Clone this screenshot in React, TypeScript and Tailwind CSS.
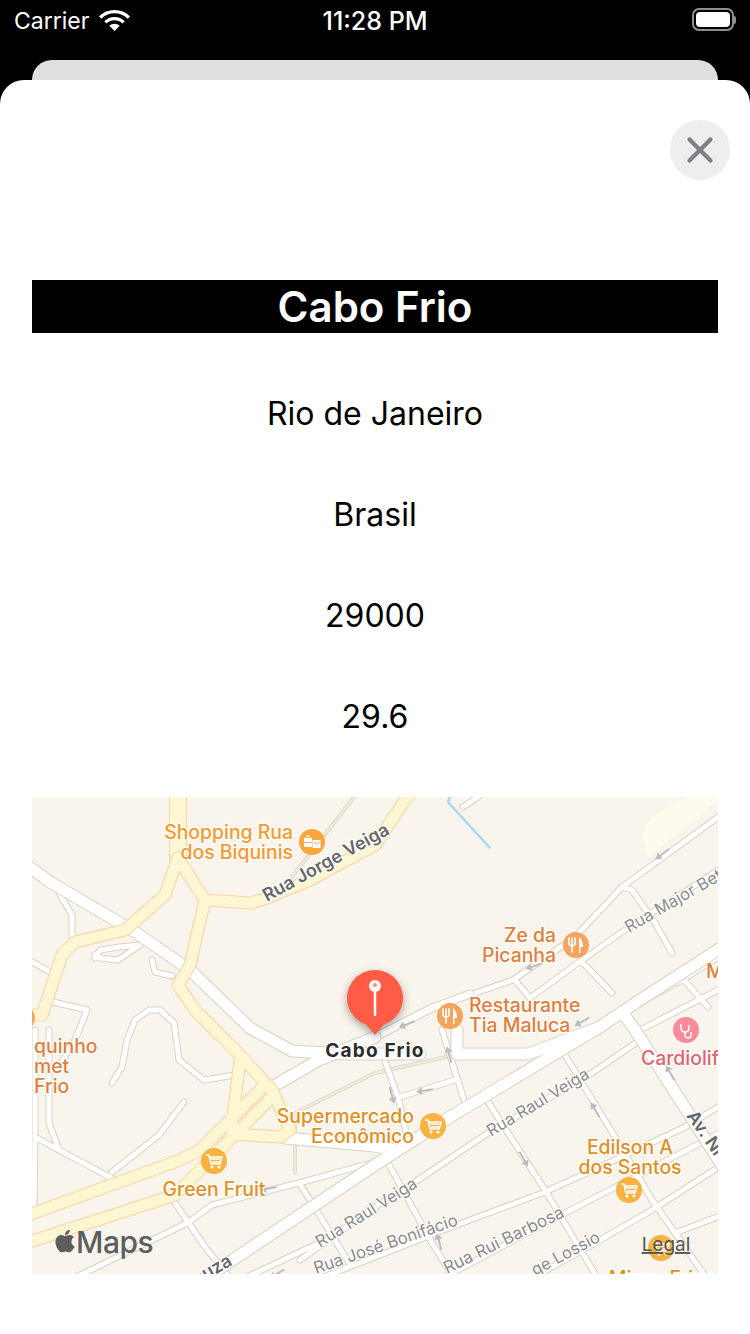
import { FC } from "react";
import { X } from "lucide-react";
import { FaApple } from "react-icons/fa";

type Pt = [number, number];

// map roads, in page coordinates (the svg viewBox matches the page)
const bigRoads: Pt[][] = [
  [[20, 860], [50, 882], [135, 932], [190, 970], [250, 1028], [292, 1051], [345, 1054], [420, 1054]],
  [[272, 1087], [319, 1060], [375, 1037]],
  [[195, 1285], [375, 1165], [445, 1120], [595, 1030], [640, 1000], [730, 942]],
  [[457, 1030], [457, 1054], [528, 1054], [600, 1027]],
  [[622, 1012], [635, 1030], [725, 1170]],
  [[285, 1138], [375, 1146], [395, 1150]],
];

const midRoads: Pt[][] = [[[375, 1037], [432, 1008], [470, 994]]];

const thinRoads: Pt[][] = [
  [[432, 1008], [513, 980], [575, 937], [622, 887], [725, 812]],
  [[622, 887], [632, 890], [655, 923], [672, 953]],
  [[515, 980], [530, 998], [582, 960], [625, 930], [725, 866]],
  [[582, 962], [612, 993]],
  [[632, 1007], [682, 980], [725, 953]],
  [[682, 978], [708, 1007]],
  [[640, 1030], [718, 990]],
  [[562, 1050], [615, 1137], [652, 1200], [708, 1280]],
  [[375, 1207], [418, 1180], [488, 1133], [592, 1073], [640, 1040]],
  [[300, 1260], [375, 1207]],
  [[488, 1102], [545, 1190], [595, 1274]],
  [[290, 1290], [375, 1257], [462, 1223], [545, 1192], [615, 1160], [685, 1127], [725, 1103]],
  [[430, 1285], [565, 1213], [635, 1177], [725, 1130]],
  [[520, 1285], [595, 1243], [652, 1210], [725, 1163]],
  [[675, 1233], [725, 1214]],
  [[388, 1163], [432, 1243], [455, 1280]],
  [[382, 1053], [398, 1097], [408, 1140]],
  [[442, 1030], [465, 1103]],
  [[400, 1097], [455, 1080]],
  [[184, 1102], [159, 1135], [112, 1172]],
  [[112, 1083], [122, 1067], [127, 1040], [135, 1020], [149, 1010], [160, 1010], [174, 1023], [179, 1060], [204, 1080], [235, 1075]],
  [[32, 962], [52, 973]],
  [[45, 1000], [87, 1010], [75, 1040], [60, 1065]],
  [[35, 1030], [35, 1137], [115, 1180], [120, 1182]],
  [[49, 1030], [49, 1123], [59, 1150]],
  [[35, 1137], [34, 1207]],
  [[60, 1285], [189, 1222], [212, 1205], [299, 1183], [375, 1162]],
  [[175, 1203], [205, 1247], [232, 1280]],
  [[299, 1183], [312, 1203], [349, 1263]],
  [[312, 1203], [375, 1167]],
  [[230, 1285], [319, 1243], [375, 1210]],
  [[60, 895], [72, 915], [72, 937]],
  [[95, 958], [100, 950], [120, 947], [140, 945], [118, 960], [100, 958], [95, 955]],
  [[152, 960], [155, 972], [172, 976]],
  [[478, 797], [463, 807]],
];

const paleRoads: Pt[][] = [
  [[354, 797], [292, 877]],
  [[455, 1055], [375, 1073], [295, 1113], [295, 1173]],
];

const yellowRoads: Pt[][] = [
  [[178, 858], [205, 900], [250, 903], [262, 900], [310, 880], [375, 845], [412, 790]],
  [[178, 858], [165, 895], [125, 930], [75, 942], [62, 955], [42, 1015], [25, 1015]],
  [[205, 900], [190, 965], [178, 985], [195, 1010], [235, 1050], [272, 1090], [290, 1130], [280, 1137], [232, 1134]],
  [[20, 1218], [180, 1160], [200, 1150], [265, 1085]],
  [[20, 1245], [175, 1195], [200, 1170], [272, 1097]],
  [[240, 1060], [232, 1125]],
];

const yellowTop: Pt[][] = [[[178, 790], [178, 860]]];

const toPoints = (pts: Pt[]) => pts.map((p) => p.join(",")).join(" ");

const Roads: FC<{ list: Pt[][]; width: number; casing: string; fill: string }> = ({
  list,
  width,
  casing,
  fill,
}) => (
  <g fill="none" strokeLinecap="round" strokeLinejoin="round">
    {list.map((r, i) => (
      <polyline key={`c${i}`} points={toPoints(r)} stroke={casing} strokeWidth={width + 2} />
    ))}
    {list.map((r, i) => (
      <polyline key={`f${i}`} points={toPoints(r)} stroke={fill} strokeWidth={width} />
    ))}
  </g>
);

type LabelProps = {
  x: number;
  y: number;
  color: string;
  size?: number;
  weight?: number;
  anchor?: "start" | "middle" | "end";
  rotate?: number;
  spacing?: number;
  text: string;
};

const Label: FC<LabelProps> = ({ x, y, color, size = 19.4, weight = 500, anchor = "start", rotate, spacing, text }) => (
  <text
    x={x}
    y={y}
    fill={color}
    fontSize={size}
    fontWeight={weight}
    textAnchor={anchor}
    letterSpacing={spacing}
    stroke="#ffffff"
    strokeWidth={2.5}
    strokeOpacity={0.85}
    paintOrder="stroke"
    transform={rotate ? `rotate(${rotate} ${x} ${y})` : undefined}
  >
    {text}
  </text>
);

const Arrow: FC<{ x: number; y: number; angle: number }> = ({ x, y, angle }) => (
  <g transform={`translate(${x} ${y}) rotate(${angle})`} fill="#bcbcbc">
    <rect x="-9" y="-1" width="14" height="2" />
    <path d="M-12 0l6-4v8z" />
  </g>
);

const Cart: FC<{ x: number; y: number; bg?: string }> = ({ x, y, bg = "#f7b23f" }) => (
  <g transform={`translate(${x} ${y})`}>
    <circle r="13" fill={bg} />
    <path d="M-8-6h3l2 9h9l2-7H-4" fill="none" stroke="#fff" strokeWidth="1.6" strokeLinejoin="round" />
    <path d="M-3-2h9M-2 1h8" stroke="#fff" strokeWidth="1.4" />
    <circle cx="-2" cy="6" r="1.5" fill="#fff" />
    <circle cx="5" cy="6" r="1.5" fill="#fff" />
  </g>
);

const Fork: FC<{ x: number; y: number }> = ({ x, y }) => (
  <g transform={`translate(${x} ${y})`}>
    <circle r="13" fill="#f6a35c" />
    <path d="M-7-7v5q0 3 3 3t3-3v-5M-4-7v14" fill="none" stroke="#fff" strokeWidth="1.7" strokeLinecap="round" />
    <path d="M3-8q4 3 4 10h-2.500v6h-1.500z" fill="#fff" />
  </g>
);

const MapView: FC = () => (
  <svg viewBox="32 797 686 477" className="block w-[686px] h-[477px] bg-[#f9f4ec] font-['Inter',sans-serif]">
    <path d="M642 833q6-20 46-36h30v4l-70 57z" fill="#fdfaee" />
    <polyline points="450,797 448,802 490,848" fill="none" stroke="#a9d9ee" strokeWidth="2.500" />
    <Roads list={paleRoads} width={2} casing="#e0dccb" fill="#efeadb" />
    <Roads list={thinRoads} width={5} casing="#d9d2c6" fill="#ffffff" />
    <Roads list={midRoads} width={7} casing="#d9d2c6" fill="#ffffff" />
    <Roads list={bigRoads} width={11} casing="#d9d2c6" fill="#ffffff" />
    <Roads list={yellowTop} width={16} casing="#fbd3a0" fill="#fdf6d3" />
    <Roads list={yellowRoads} width={11} casing="#fbd3a0" fill="#fdf6d3" />

    <Arrow x={665} y={852} angle={-38} />
    <Arrow x={537} y={965} angle={-20} />
    <Arrow x={410} y={1023} angle={-22} />
    <Arrow x={585} y={1020} angle={-30} />
    <Arrow x={450} y={1058} angle={75} />
    <Arrow x={391} y={1092} angle={-105} />
    <Arrow x={428} y={1090} angle={-10} />
    <Arrow x={272} y={1188} angle={-10} />
    <Arrow x={672} y={1076} angle={60} />
    <Arrow x={597} y={1113} angle={60} />
    <Arrow x={522} y={1156} angle={-120} />
    <Arrow x={440} y={1245} angle={75} />
    <Arrow x={280} y={1272} angle={-30} />

    <Label x={293} y={839} anchor="end" color="#f59a2e" text="Shopping Rua" />
    <Label x={293} y={859} anchor="end" color="#f59a2e" text="dos Biquinis" />
    <g transform="translate(312 842)">
      <circle r="13" fill="#f9a63d" />
      <rect x="-8" y="-4" width="8" height="4" fill="#fff" />
      <rect x="-8" y="1" width="8" height="4" fill="#fff" />
      <rect x="0.500" y="-2" width="8" height="8" fill="#fff" />
      <path d="M-6-4q2-5 4 0" fill="none" stroke="#fff" strokeWidth="1" />
      <path d="M2 0l2.500 2 2.500-2" fill="none" stroke="#f9a63d" strokeWidth="1" />
    </g>
    <Label x={267} y={902} rotate={-29} size={18} weight={600} color="#66666a" text="Rua Jorge Veiga" />

    <Label x={556} y={942} anchor="end" color="#e07f3c" text="Ze da" />
    <Label x={556} y={962} anchor="end" color="#e07f3c" text="Picanha" />
    <Fork x={576} y={945} />
    <Label x={469} y={1012} color="#e07f3c" text="Restaurante" />
    <Label x={469} y={1032} color="#e07f3c" text="Tia Maluca" />
    <Fork x={450} y={1016} />
    <Label x={706} y={978} color="#e07f3c" text="M" />
    <circle cx="22" cy="1018" r="13" fill="#f6a35c" />
    <Label x={34} y={1053} color="#e07f3c" text="quinho" />
    <Label x={34} y={1073} color="#e07f3c" text="met" />
    <Label x={34} y={1093} color="#e07f3c" text="Frio" />

    <g transform="translate(686 1030)">
      <circle r="13" fill="#f98a9a" />
      <path d="M-5-6v4q0 4 4 4t4-4v-3M-1 2v3q0 3 3 3t3-3v-3" fill="none" stroke="#fff" strokeWidth="1.5" />
    </g>
    <Label x={641} y={1065} color="#e0656f" text="Cardiolif" />

    <Label x={414} y={1123} anchor="end" color="#e0901f" text="Supermercado" />
    <Label x={414} y={1143} anchor="end" color="#e0901f" text="Econômico" />
    <Cart x={433} y={1126} />
    <Cart x={214} y={1161} />
    <Label x={214} y={1196} anchor="middle" color="#e0901f" text="Green Fruit" />
    <Label x={630} y={1154} anchor="middle" color="#e0901f" text="Edilson A" />
    <Label x={630} y={1174} anchor="middle" color="#e0901f" text="dos Santos" />
    <Cart x={629} y={1190} />
    <Cart x={661} y={1248} />
    <Label x={662} y={1285} anchor="middle" color="#e0901f" text="Minas Frios" />
    <circle cx="260" cy="1287" r="13" fill="#f98a9a" />

    <Label x={629} y={933} rotate={-30} size={16.5} weight={400} color="#8b8b8b" text="Rua Major Bet" />
    <Label x={491} y={1137} rotate={-31} size={16.5} weight={400} color="#8b8b8b" text="Rua Raul Veiga" />
    <Label x={320} y={1248} rotate={-32} size={16.5} weight={400} color="#8b8b8b" text="Rua Raul Veiga" />
    <Label x={316} y={1274} rotate={-19} size={16.7} weight={400} color="#8b8b8b" text="Rua José Bonifácio" />
    <Label x={447} y={1274} rotate={-26} size={17} weight={400} color="#8b8b8b" text="Rua Rui Barbosa" />
    <Label x={535} y={1276} rotate={-28} size={16.5} weight={400} color="#8b8b8b" text="ge Lossio" />
    <Label x={686} y={1116} rotate={55} size={18} weight={600} color="#66666a" text="Av. Ni" />
    <Label x={206} y={1280} rotate={-30} size={18} weight={600} color="#66666a" text="uza" />

    <Label x={375} y={1057} anchor="middle" weight={700} size={19} spacing={1.2} color="#2b2b2b" text="Cabo Frio" />

    {/* selected pin */}
    <g className="drop-shadow-[0_3px_4px_rgba(0,0,0,0.35)]">
      <path d="M375 1035l-9-10.500a28 28 0 1 1 18 0z" fill="#ff5b47" />
    </g>
    <path d="M375 991v24" stroke="#fff" strokeWidth="2.500" strokeLinecap="round" />
    <circle cx="375" cy="986" r="6" fill="#fff" />
    <circle cx="375" cy="985" r="2" fill="#ff8a7a" />

    {/* legal and logo */}
    <FaApple x={52} y={1228} size={26} color="#5d5d5d" />
    <text x={76} y={1253} fontSize={30} fontWeight={500} fill="#5d5d5d" letterSpacing={-0.5}>
      Maps
    </text>
    <text x={666} y={1251} fontSize={19} textAnchor="middle" fill="#555555" textDecoration="underline">
      Legal
    </text>
  </svg>
);

const StatusBar: FC = () => (
  <div className="h-[60px] px-[14px] pt-[8px] text-white flex justify-between items-start font-['Inter',sans-serif]">
    <div className="w-[130px] flex items-center gap-[10px] text-[23px] leading-[26px]">
      <span>Carrier</span>
      <svg viewBox="0 0 32 24" className="w-[31px] h-[23px] mt-[-1px] shrink-0">
        <path d="M1 9a21 21 0 0 1 30 0" fill="none" stroke="#fff" strokeWidth="3.500" />
        <path d="M6.500 14a13.500 13.500 0 0 1 19 0" fill="none" stroke="#fff" strokeWidth="3.500" />
        <path d="M16 23l-5.500-5.500a8 8 0 0 1 11 0z" fill="#fff" />
      </svg>
    </div>
    <div className="text-[25px] leading-[26px] font-medium">11:28 PM</div>
    <div className="w-[130px] flex justify-end items-center">
      <div className="flex items-center">
        <div className="w-[42px] h-[23px] rounded-[7px] border-2 border-[#8e8e8e] p-[2px]">
          <div className="w-full h-full rounded-[4px] bg-white" />
        </div>
        <div className="w-[2px] h-[8px] rounded-r-sm bg-[#8e8e8e]" />
      </div>
    </div>
  </div>
);

const details = ["Rio de Janeiro", "Brasil", "29000", "29.6"];

export default function App() {
  return (
    <div className="w-[750px] h-[1334px] bg-black overflow-hidden flex flex-col font-['Inter',sans-serif]">
      <StatusBar />
      <div className="h-[20px] mx-[32px] bg-[#dfdfdf] rounded-t-[20px]" />
      <div className="flex-1 bg-white rounded-t-[24px] px-[32px]">
        <div className="flex justify-end pt-[40px] mr-[-12px]">
          <button
            type="button"
            className="w-[60px] h-[60px] rounded-full bg-[#eeeeee] flex items-center justify-center text-[#808084]"
          >
            <X size={42} strokeWidth={2.4} />
          </button>
        </div>
        <h1 className="mt-[100px] h-[53px] bg-black text-white text-center text-[42px] leading-[53px] font-semibold">
          Cabo Frio
        </h1>
        <div className="mt-[61px] flex flex-col gap-[61px]">
          {details.map((d) => (
            <p key={d} className="h-[40px] text-center text-[32px] leading-[40px] text-black">
              {d}
            </p>
          ))}
        </div>
        <div className="mt-[60px]">
          <MapView />
        </div>
      </div>
    </div>
  );
}
